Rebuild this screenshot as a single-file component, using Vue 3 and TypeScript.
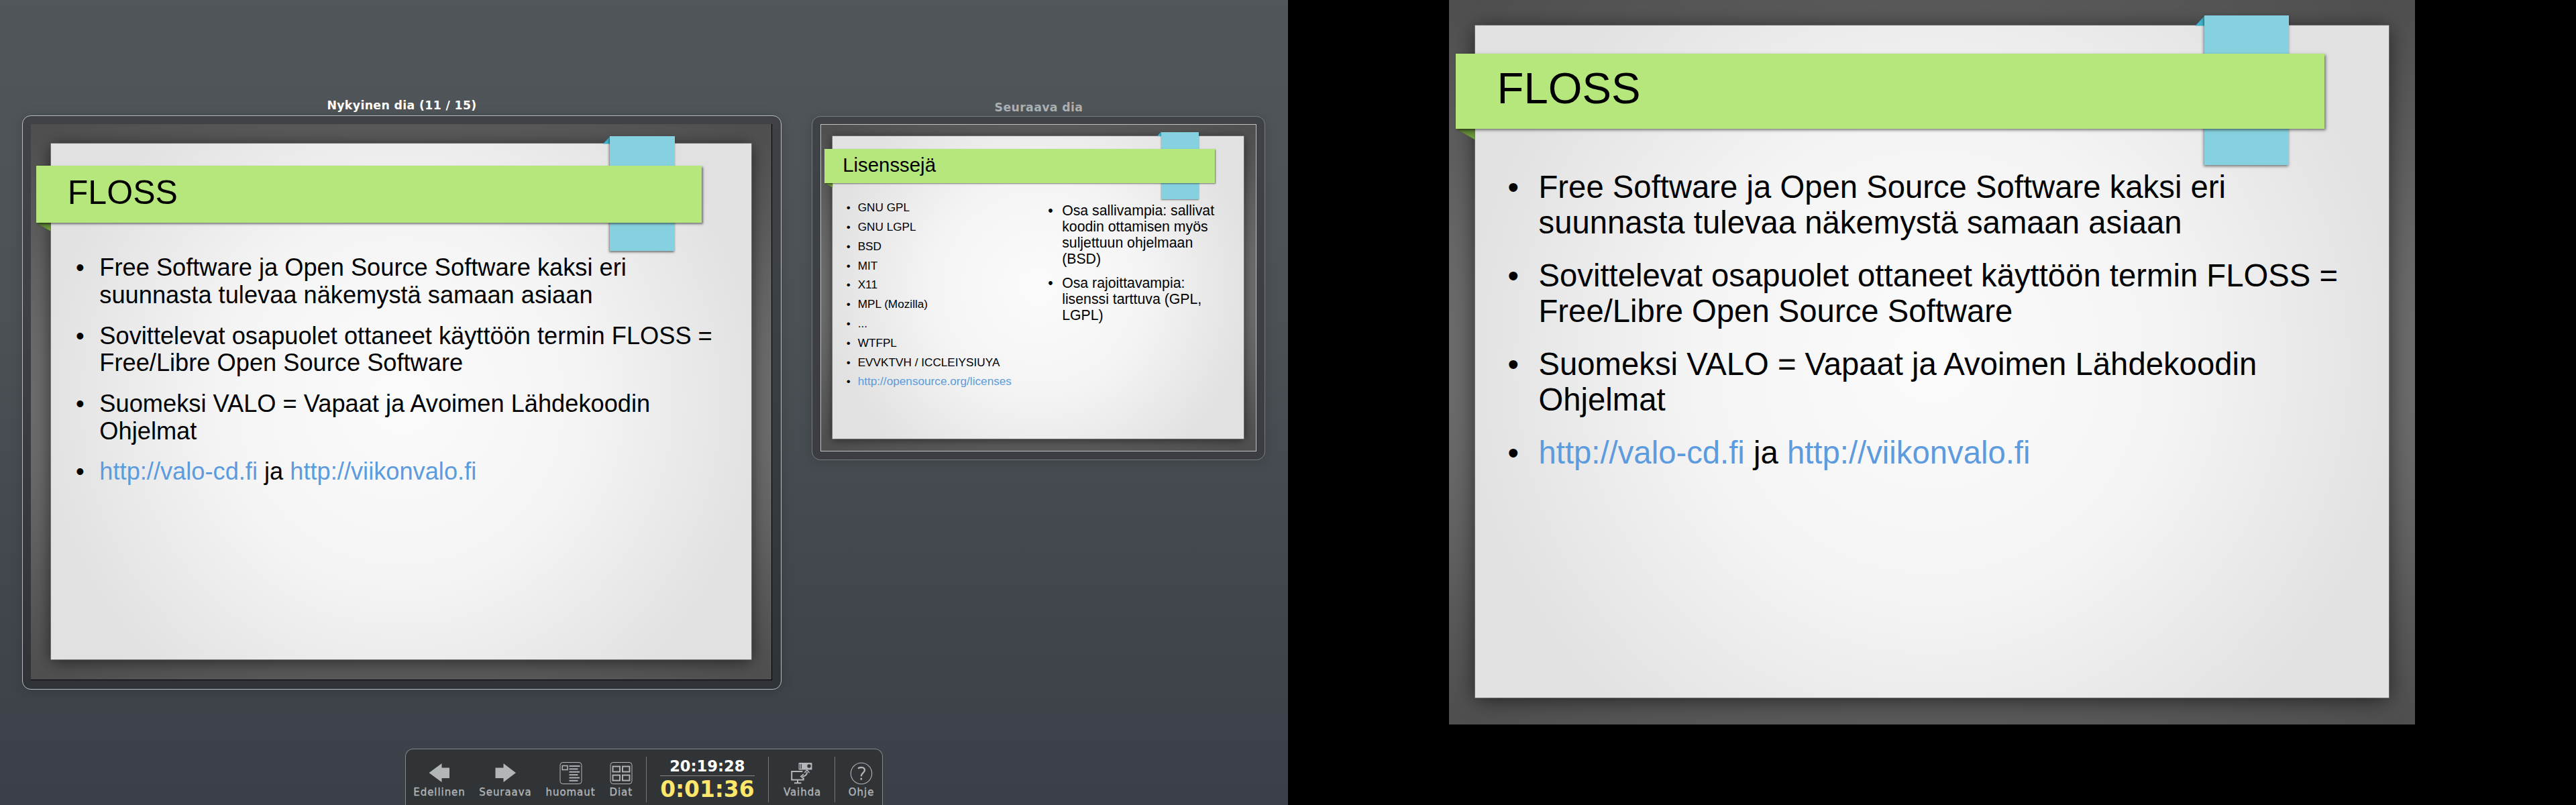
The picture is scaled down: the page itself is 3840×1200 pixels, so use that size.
<script setup lang="ts">
interface Part {
  text: string
  link?: boolean
}
type Bullet = Part[][]

interface ListBlock {
  kind: string
  items: Bullet[]
}
interface SlideData {
  title: string
  lists: ListBlock[]
}

const t = (text: string): Part[] => [{ text }]

const floss: SlideData = {
  title: 'FLOSS',
  lists: [
    {
      kind: 'full',
      items: [
        [t('Free Software ja Open Source Software kaksi eri'), t('suunnasta tulevaa näkemystä samaan asiaan')],
        [t('Sovittelevat osapuolet ottaneet käyttöön termin FLOSS ='), t('Free/Libre Open Source Software')],
        [t('Suomeksi VALO = Vapaat ja Avoimen Lähdekoodin'), t('Ohjelmat')],
        [[{ text: 'http://valo-cd.fi', link: true }, { text: ' ja ' }, { text: 'http://viikonvalo.fi', link: true }]],
      ],
    },
  ],
}

const licences: SlideData = {
  title: 'Lisenssejä',
  lists: [
    {
      kind: 'narrow',
      items: [
        [t('GNU GPL')],
        [t('GNU LGPL')],
        [t('BSD')],
        [t('MIT')],
        [t('X11')],
        [t('MPL (Mozilla)')],
        [t('...')],
        [t('WTFPL')],
        [t('EVVKTVH / ICCLEIYSIUYA')],
        [[{ text: 'http://opensource.org/licenses', link: true }]],
      ],
    },
    {
      kind: 'side',
      items: [
        [t('Osa sallivampia: sallivat'), t('koodin ottamisen myös'), t('suljettuun ohjelmaan'), t('(BSD)')],
        [t('Osa rajoittavampia:'), t('lisenssi tarttuva (GPL,'), t('LGPL)')],
      ],
    },
  ],
}

const views = [
  { id: 'current', label: 'Nykyinen dia (11 / 15)', slide: floss },
  { id: 'next', label: 'Seuraava dia', slide: licences },
  { id: 'show', label: '', slide: floss },
]
const noteLines = [16, 13, 15.5, 13, 15.5, 13]
</script>

<template>
  <div class="desktop">
    <div class="screens">
      <section v-for="v in views" :key="v.id" class="view" :class="v.id">
        <h2 v-if="v.label" class="caption">{{ v.label }}</h2>
        <div class="frame">
          <article class="slide">
            <div class="paper"></div>
            <svg class="folds" viewBox="0 0 1440 1080">
              <defs>
                <linearGradient id="gfold" x1="0" y1="0" x2="0" y2="1">
                  <stop offset="0" stop-color="#52702f" />
                  <stop offset="1" stop-color="#74a83c" />
                </linearGradient>
              </defs>
              <polygon points="10,192 38.5,192 38.5,208" fill="url(#gfold)" />
              <polygon points="1112.5,38.5 1126.5,23.5 1126.5,38.5" fill="#40b3cb" />
            </svg>
            <div class="tab"></div>
            <div class="ribbon"><h1>{{ v.slide.title }}</h1></div>
            <div class="body">
              <ul v-for="list in v.slide.lists" :key="list.kind" :class="list.kind">
                <li v-for="(item, i) in list.items" :key="i">
                  <span class="dot">•</span>
                  <div>
                    <div v-for="(line, j) in item" :key="j" class="line"><span v-for="(p, k) in line" :key="k" :class="{ link: p.link }">{{ p.text }}</span></div>
                  </div>
                </li>
              </ul>
            </div>
          </article>
        </div>
      </section>
    </div>

    <nav class="toolbar">
      <button class="tool prev">
        <svg viewBox="0 0 34 36"><path d="M1.500 18 20.500 4v6.500h11.500v15.500h-11.500v6z" fill="#b2b6b9" /></svg>
        <span>Edellinen</span>
      </button>
      <button class="tool wide">
        <svg viewBox="0 0 34 36"><path d="M32 18 13.500 4v6.500h-12v15.500h12v6z" fill="#b2b6b9" /></svg>
        <span>Seuraava</span>
      </button>
      <button class="tool wide">
        <svg viewBox="0 0 34 36" fill="none" stroke="#b2b6b9">
          <rect x="1" y="2.500" width="32" height="32" rx="4" />
          <rect x="4.300" y="7.500" width="7.700" height="6" stroke-width="1.500" />
          <path v-for="(w, i) in noteLines" :key="i" :d="`M14.500 ${8 + i * 4.350}h${w}`" stroke-width="1.900" />
        </svg>
        <span>huomaut</span>
      </button>
      <button class="tool slim">
        <svg viewBox="0 0 34 36" fill="none" stroke="#b2b6b9">
          <rect x="1" y="2.500" width="32" height="32" rx="4" />
          <g stroke-width="1.900">
            <rect x="4.500" y="8.500" width="10.500" height="8" />
            <rect x="19" y="8.500" width="10.500" height="8" />
            <rect x="4.500" y="21.500" width="10.500" height="8" />
            <rect x="19" y="21.500" width="10.500" height="8" />
          </g>
        </svg>
        <span>Diat</span>
      </button>
      <i class="sep first"></i>
      <div class="clock">
        <div class="time">20:19:28</div>
        <div class="timer">0:01:36</div>
      </div>
      <i class="sep"></i>
      <button class="tool swap">
        <svg viewBox="0 0 34 36">
          <rect x="12.500" y="3" width="20" height="10.500" rx="1" fill="#b2b6b9" />
          <path d="M14.200 5v7M16.500 5v7" stroke="#303437" stroke-width="1" />
          <circle cx="28" cy="8" r="2.700" fill="#303437" />
          <path d="M18.500 16H2.200v12.500h17.500v-3.500" fill="none" stroke="#b2b6b9" stroke-width="2" />
          <path d="M11 29v3.500M6 33.200h10.500" stroke="#b2b6b9" stroke-width="2" />
          <path d="M25 17c0 3.500-2.500 6-7 6.500" fill="none" stroke="#b2b6b9" stroke-width="2" />
          <path d="M21.200 18 25 14l3.500 4M20 19.800l-4.300 3.700 4.300 3.200" fill="none" stroke="#b2b6b9" stroke-width="1.600" />
        </svg>
        <span>Vaihda</span>
      </button>
      <i class="sep"></i>
      <button class="tool help">
        <svg viewBox="0 0 34 36" fill="none" stroke="#b2b6b9">
          <circle cx="17" cy="19" r="15.700" stroke-width="1.100" />
          <path d="M12 11.700c3-2.700 10-2.300 10 2.300 0 4-5.200 4-5.200 9.300" stroke-width="2.300" />
          <path d="M16.800 25.700v2.800" stroke-width="2.600" />
        </svg>
        <span>Ohje</span>
      </button>
    </nav>
  </div>
</template>

<style>
body {
  background: #000;
  overflow: hidden;
}
</style>

<style scoped>
.desktop {
  width: 3840px;
  height: 1200px;
  box-sizing: border-box;
  display: flex;
  flex-direction: column;
  justify-content: space-between;
  background: linear-gradient(#50565a 0%, #4b5155 40%, #444a4f 62%, #3b3f48 100%) 0 0 / 1920px 1200px no-repeat #000;
}
.screens {
  display: flex;
  align-items: flex-start;
  height: 1080px;
}
.view {
  --u: 1px;
}
.view.current {
  --u: 0.7667px;
  margin: 143px 0 0 33px;
}
.view.next {
  --u: 0.45px;
  margin: 146px 0 0 45px;
}
.view.show {
  margin-left: 274px;
}
.caption {
  margin: 0;
  text-align: center;
  font: bold 17.33px/29px 'DejaVu Sans', sans-serif;
  letter-spacing: 0.35px;
  color: #fff;
}
.next .caption {
  line-height: 29px;
  height: 27px;
  padding-left: 1px;
  color: #abafb1;
}
.current .frame {
  padding: 12px 13px 13px 12px;
  border: 1px solid #b8bcbf;
  border-radius: 13px;
  background: linear-gradient(#3f4145, #3d4045 30%, #2f3338);
  box-shadow: 0 2px 18px rgba(0, 0, 0, 0.15);
}
.next .frame {
  padding: 11px 12px 12px;
  border: 1px solid #787c80;
  border-radius: 13px;
  background: linear-gradient(#3f4246, #3b3d43);
  box-shadow: 0 2px 18px rgba(0, 0, 0, 0.15);
}
.current .slide {
  border: solid #000;
  border-width: 0 1px 1px 0;
}
.next .slide {
  border: 1px solid #c0c1c2;
}
.slide {
  position: relative;
  width: calc(var(--u) * 1440);
  height: calc(var(--u) * 1080);
  overflow: hidden;
  font-family: 'Liberation Sans', Arial, sans-serif;
  color: #000;
  background: radial-gradient(ellipse 76% 54% at 50% 50%, #777 0%, #6b6b6b 65%, #5a5a5a 90%, #4f4f4f 112%);
}
.current .slide {
  width: 1104px;
  height: 828px;
}
.paper {
  position: absolute;
  left: calc(var(--u) * 38.5);
  top: calc(var(--u) * 38.3);
  width: calc(var(--u) * 1362.500);
  height: calc(var(--u) * 1002.200);
  background: radial-gradient(circle calc(var(--u) * 710) at 50% 50%, #fbfbfb, #f4f4f4 50%, #e1e1e1);
  box-shadow: 0 0 0 0.5px #999, 0 calc(var(--u) * 4) calc(var(--u) * 30) rgba(0, 0, 0, 0.6);
}
.folds {
  position: absolute;
  inset: 0;
  width: calc(var(--u) * 1440);
  height: calc(var(--u) * 1080);
}
.tab {
  position: absolute;
  left: calc(var(--u) * 1126);
  top: calc(var(--u) * 23.400);
  width: calc(var(--u) * 126);
  height: calc(var(--u) * 223);
  background: #86d1df;
  box-shadow: calc(var(--u) * -1) calc(var(--u) * 2) calc(var(--u) * 4) rgba(0, 0, 0, 0.5);
}
.ribbon {
  position: absolute;
  left: calc(var(--u) * 10);
  top: calc(var(--u) * 80.300);
  width: calc(var(--u) * 1294.500);
  height: calc(var(--u) * 112);
  background: #b5e77c;
  box-shadow: calc(var(--u) * 2) calc(var(--u) * 2) calc(var(--u) * 4) rgba(0, 0, 0, 0.5);
}
.ribbon h1 {
  margin: 0;
  padding-left: calc(var(--u) * 61.500);
  font-size: calc(var(--u) * 65.300);
  font-weight: 400;
  line-height: calc(var(--u) * 105.500);
  white-space: nowrap;
}
.show h1 {
  line-height: 104px;
}
.body {
  position: relative;
  display: flex;
}
ul {
  margin: 0;
  padding: 0;
  list-style: none;
  font-size: calc(var(--u) * 47.270);
  line-height: calc(var(--u) * 53);
}
li {
  display: flex;
  margin-bottom: calc(var(--u) * 26.200);
  white-space: nowrap;
}
.line {
  white-space: pre;
}
.dot {
  flex: none;
  width: calc(var(--u) * 46);
}
.full {
  padding: calc(var(--u) * 251.500) 0 0 calc(var(--u) * 87.500);
}
.current .full {
  padding-top: calc(var(--u) * 253.500);
}
.narrow {
  width: calc(var(--u) * 668);
  padding: calc(var(--u) * 254) 0 0 calc(var(--u) * 83.700);
  font-size: calc(var(--u) * 38.200);
  line-height: calc(var(--u) * 44);
}
.narrow li {
  margin-bottom: calc(var(--u) * 20);
}
.narrow .dot {
  width: calc(var(--u) * 37.800);
}
.side {
  padding-top: calc(var(--u) * 258);
  line-height: calc(var(--u) * 53.330);
}
.side .dot {
  width: calc(var(--u) * 46.500);
}
.link {
  color: #5c9bdd;
}
.toolbar {
  display: flex;
  box-sizing: border-box;
  width: 712px;
  height: 84px;
  margin-left: 604px;
  border: 1px solid #85888b;
  border-bottom: 0;
  border-radius: 12px 12px 0 0;
  background: #303437;
}
.tool {
  display: flex;
  flex-direction: column;
  align-items: center;
  flex: none;
  box-sizing: border-box;
  width: 100px;
  padding: 17px 0 0;
  border: 0;
  background: none;
  font: 15px/20px 'DejaVu Sans', sans-serif;
  letter-spacing: 0.95px;
  color: #b2b6b9;
  -webkit-text-stroke: 0.35px #b2b6b9;
}
.tool svg {
  width: 34px;
  height: 36px;
  margin-bottom: 1px;
}
.tool.wide {
  width: 97px;
}
.tool.slim {
  width: 53.600px;
}
.tool.swap {
  width: 98px;
}
.tool.help {
  width: 70px;
  padding-left: 8px;
}
.sep {
  flex: none;
  width: 1px;
  height: 68px;
  margin-top: 11px;
  background: #75787b;
}
.sep.first {
  margin-left: 10px;
}
.clock {
  flex: none;
  width: 181.500px;
  padding-top: 11px;
  box-sizing: border-box;
  display: flex;
  flex-direction: column;
  align-items: center;
  font-family: 'DejaVu Sans', sans-serif;
  font-weight: 700;
}
.time {
  width: 141px;
  height: 28px;
  border-bottom: 1px solid #85888b;
  text-align: center;
  font-size: 22.600px;
  line-height: 28px;
  color: #fff;
}
.timer {
  font-size: 32.800px;
  line-height: 40px;
  color: #ffe76b;
}
.swap span {
  padding-left: 2px;
}
</style>
